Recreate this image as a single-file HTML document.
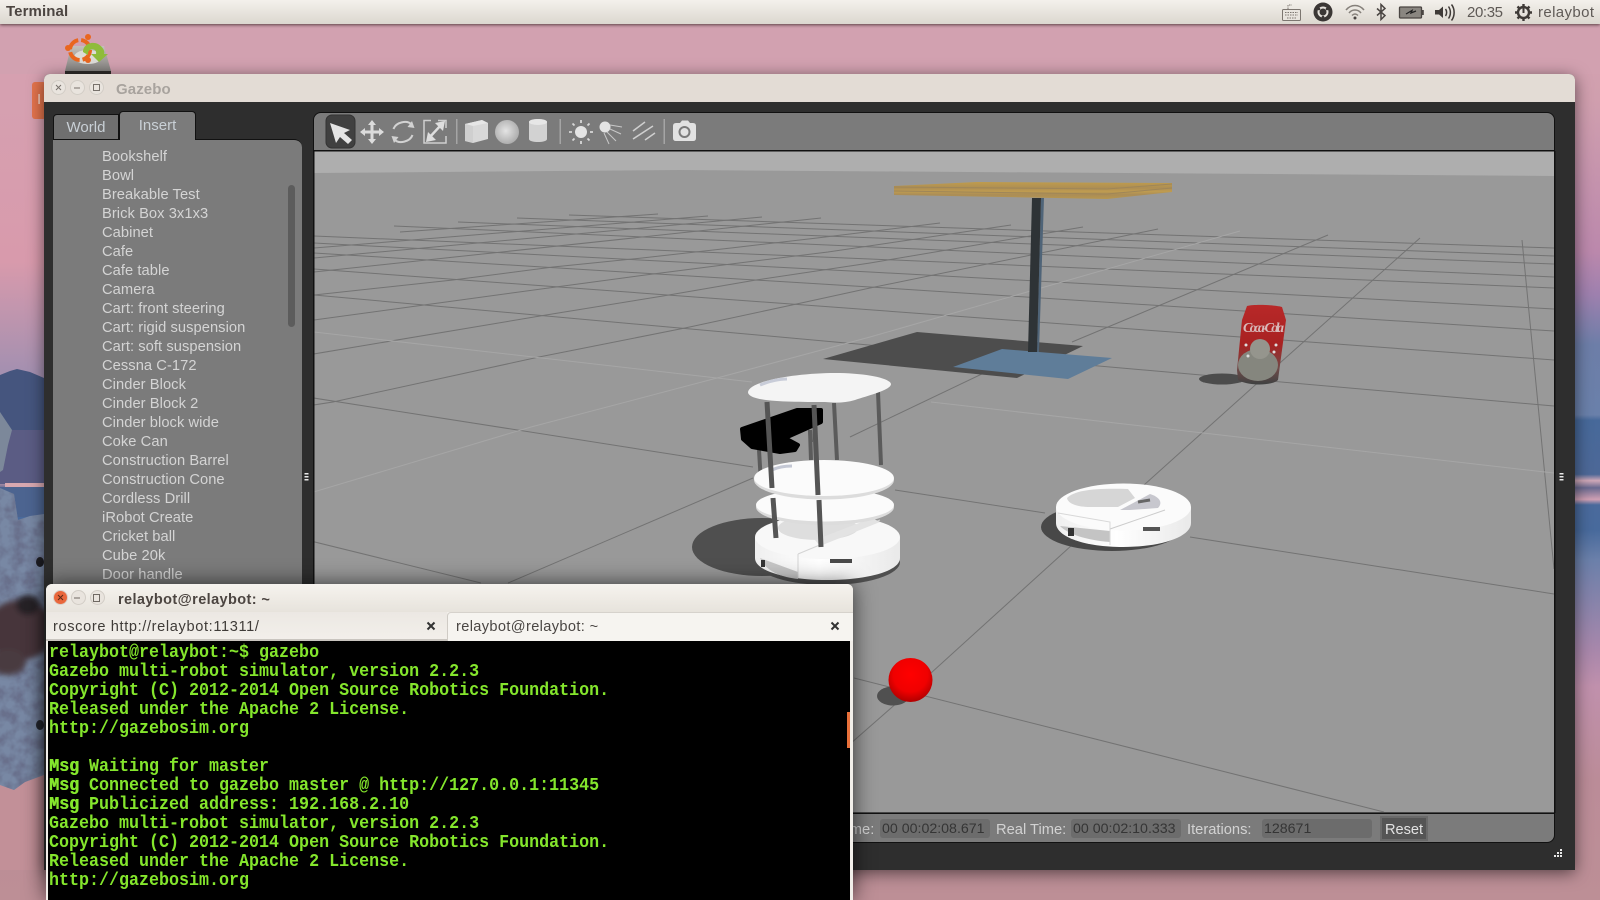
<!DOCTYPE html>
<html lang="en"><head><meta charset="utf-8"><title>Gazebo</title>
<style>
html,body{margin:0;padding:0;width:1600px;height:900px;overflow:hidden;background:#c99aa8}
body{position:relative;font-family:"Liberation Sans",sans-serif}
.a{position:absolute;white-space:nowrap}
svg.full{position:absolute;left:0;top:0}
#topbar{left:0;top:0;width:1600px;height:24px;background:linear-gradient(#f4f1ec,#dcd7cf);box-shadow:0 1px 3px rgba(50,30,30,.75)}
#gz{left:44px;top:74px;width:1531px;height:796px;background:#2e2e2e;border-radius:6px 6px 0 0;box-shadow:0 3px 16px rgba(0,0,0,.55)}
#gztitle{left:0;top:0;width:1531px;height:28px;background:#e3dcd5;border-radius:6px 6px 0 0}
.wb{position:absolute;width:15px;height:15px;border-radius:50%;background:#e9e4de;border:1px solid #d2cdc6;box-sizing:border-box}
.tabw{background:#6f6f6f;border:1px solid #111;box-sizing:border-box;border-radius:4px 0 0 0;color:#c9d0d6;font-size:15px;text-align:center}
.tabi{background:#7b7b7b;border:1px solid #111;border-bottom:0;box-sizing:border-box;border-radius:4px 4px 0 0;color:#c9d0d6;font-size:15px;text-align:center}
#side{left:53px;top:139px;width:249px;height:470px;background:#7b7b7b;border-top:1px solid #111;border-radius:0 8px 0 0;box-sizing:border-box}
.it{position:absolute;left:49px;font-size:14.7px;line-height:19px;color:#d4d4d4;white-space:nowrap;letter-spacing:.06px;margin-top:2px}
#scroll{left:288px;top:185px;width:7px;height:142px;background:#5c5c5c;border-radius:4px}
#vp{left:313px;top:112px;width:1242px;height:731px;background:#7b7b7b;border:1px solid #111;border-radius:8px;box-sizing:border-box}
.st{position:absolute;top:821px;font-size:14.7px;line-height:18px;color:#d2d2d2;white-space:nowrap}
.fld{position:absolute;top:819px;height:19px;background:#6c6c6c;border-radius:3px;color:#353535;font-size:14.2px;line-height:21px;padding-left:2px;box-sizing:border-box;white-space:nowrap}
#term{left:46px;top:584px;width:807px;height:316px;background:#f2efea;border-radius:6px 6px 0 0;box-shadow:0 0 22px rgba(0,0,0,.65)}
#ttl{left:0;top:0;width:807px;height:28px;background:linear-gradient(#f6f3ee,#e7e3dc);border-radius:6px 6px 0 0}
#tab1{left:0;top:28px;width:401px;height:29px;background:linear-gradient(#ece8e3,#f2efea);border-bottom:2px solid #c9c5bf;box-sizing:border-box}
#tab2{left:401px;top:28px;width:406px;height:29px;background:#f6f4f0;border-left:1px solid #cfcbc5;border-top:1px solid #d6d2cc;box-sizing:border-box;border-radius:4px 0 0 0}
#blk{left:2px;top:57px;width:802px;height:259px;background:#000}
#txt{left:3px;top:60px;margin:0;white-space:pre;font-family:"Liberation Mono",monospace;font-size:18px;font-weight:bold;line-height:19.03px;color:#84e62c;transform:scaleX(.926);transform-origin:0 0}
#txt b{text-shadow:.6px 0 0 #84e62c}
#sb{left:801px;top:128px;width:3px;height:36px;background:#e8703a}
</style></head><body>

<svg class="full" width="1600" height="900" viewBox="0 0 1600 900">
<defs>
<linearGradient id="wp" x1="0" y1="0" x2="0" y2="900" gradientUnits="userSpaceOnUse">
<stop offset="0" stop-color="#d6a4b2"/><stop offset=".11" stop-color="#d09fae"/><stop offset=".28" stop-color="#bb88ac"/><stop offset=".327" stop-color="#9e80ae"/><stop offset=".383" stop-color="#6d7ea8"/><stop offset=".461" stop-color="#6a80aa"/><stop offset=".467" stop-color="#47699a"/><stop offset=".527" stop-color="#4d6897"/><stop offset=".534" stop-color="#d0a8b8"/><stop offset=".542" stop-color="#6a6a90"/><stop offset=".555" stop-color="#d0a0b4"/><stop offset=".561" stop-color="#4a6a9c"/><stop offset=".589" stop-color="#486a9c"/><stop offset=".622" stop-color="#6b80aa"/><stop offset=".722" stop-color="#a887ab"/><stop offset=".763" stop-color="#c090ac"/><stop offset=".867" stop-color="#bb8c98"/><stop offset="1" stop-color="#bd8f96"/>
</linearGradient>
<linearGradient id="lf" x1="0" y1="100" x2="0" y2="370" gradientUnits="userSpaceOnUse"><stop offset="0" stop-color="#d6a0b0"/><stop offset=".6" stop-color="#d89aac"/><stop offset="1" stop-color="#a590b0"/></linearGradient>
<linearGradient id="hd" x1="0" x2="0" y1="0" y2="1"><stop offset="0" stop-color="#c4c0bb"/><stop offset="1" stop-color="#858280"/></linearGradient>
<filter id="mot" x="0" y="0" width="100%" height="100%"><feTurbulence type="fractalNoise" baseFrequency=".08" numOctaves="3" seed="4"/><feColorMatrix values="0 0 0 0 .14  0 0 0 0 .16  0 0 0 0 .26  2.6 0 0 0 -.9"/><feComposite in2="SourceAlpha" operator="in"/><feMerge><feMergeNode in="SourceGraphic"/><feMergeNode/></feMerge></filter>
<filter id="bl"><feGaussianBlur stdDeviation="3"/></filter>
</defs>
<rect width="1600" height="900" fill="url(#wp)"/>
<rect x="0" y="24" width="44" height="420" fill="url(#lf)"/>
<rect x="0" y="24" width="1600" height="50" fill="#d2a1b0"/>
<path d="M0,375 L10,371 L17,369 L30,372 L44,378 L44,484 L0,484Z" fill="#45557e"/>
<path d="M0,430 H44 V484 H0Z" fill="#6a6088" opacity=".6"/>
<path d="M0,412 L12,430 L8,445 L3,470 L0,472Z" fill="#7c889a"/>
<rect x="5" y="483" width="39" height="4" fill="#d8a8b0"/>
<rect x="0" y="487" width="44" height="30" fill="#4c6490"/>
<rect x="0" y="530" width="44" height="340" fill="#c29098"/>
<path d="M0,488 L14,494 L18,520 L30,516 L44,514 L44,775 L25,782 L14,790 L0,785Z" fill="#7888a4" filter="url(#mot)"/>
<g filter="url(#bl)"><ellipse cx="20" cy="630" rx="34" ry="30" fill="#46363a"/><ellipse cx="8" cy="662" rx="18" ry="13" fill="#4a3a40"/><ellipse cx="28" cy="605" rx="12" ry="10" fill="#262226"/></g>
<ellipse cx="40" cy="562" rx="4" ry="5" fill="#1e1e24"/><ellipse cx="40" cy="725" rx="4" ry="5" fill="#262830"/>
<!-- desktop icon -->
<g>
<polygon points="65,71 71,46 104,46 111,71" fill="url(#hd)"/>
<rect x="65" y="71" width="46" height="4" fill="#2f2c2a"/>
<ellipse cx="88" cy="57" rx="14" ry="7" fill="#dddbd7"/>
<circle cx="80" cy="50" r="10" fill="none" stroke="#e9661f" stroke-width="4" stroke-dasharray="13 3"/>
<circle cx="88" cy="37" r="3" fill="#e9661f"/><circle cx="68" cy="48" r="3" fill="#e9661f"/><circle cx="88" cy="60" r="3" fill="#e9661f"/>
<path d="M83,52 C83,44 92,41 98,44 C103,47 105,51 104,54 H108 L99,62 L91,54 H96 C97,50 93,48 90,50 C88,51 88,53 88,55Z" fill="#8fbc3a"/>
</g>
<rect x="32" y="82" width="14" height="37" rx="3" fill="#e4744d"/>
<text x="37" y="104" font-size="15" font-family="Liberation Sans" fill="#f6d9cc">I</text>
</svg>

<div class="a" id="topbar"></div>
<div class="a" style="left:6px;top:3px;font-size:15px;line-height:18px;font-weight:bold;color:#4c4541;letter-spacing:.1px">Terminal</div>

<svg class="full" width="1600" height="24" viewBox="0 0 1600 24" style="z-index:3">
<g fill="none" stroke="#7c7670">
<rect x="1282.5" y="9.5" width="18" height="11" rx="1" fill="#e8e4de"/><path d="M1288,9 V5 H1292 M1285,12.5 H1298 M1285,15 H1298 M1287,18 H1296" stroke-dasharray="1.5 1" />
</g>
<circle cx="1323" cy="12" r="9.5" fill="#3b3735"/><circle cx="1323" cy="12" r="4.5" fill="none" stroke="#e6e2dc" stroke-width="2"/><circle cx="1319" cy="9" r="1.3" fill="#3b3735"/><circle cx="1327" cy="9" r="1.3" fill="#3b3735"/><circle cx="1323" cy="17" r="1.3" fill="#3b3735"/>
<g fill="none" stroke="#85807a" stroke-width="1.5"><path d="M1346,10 C1351,4 1359,4 1364,10"/><path d="M1349,13 C1352,9 1358,9 1361,13"/><path d="M1352,15.5 C1354,13.5 1356,13.5 1358,15.5"/></g><circle cx="1355" cy="18" r="1.5" fill="#4a4542"/>
<path d="M1377,8.5 L1385,15.5 L1381,19.5 V4.5 L1385,8.5 L1377,15.5" fill="none" stroke="#4a4542" stroke-width="1.5"/>
<rect x="1399.5" y="7" width="22" height="11" rx="1" fill="#8a8680" stroke="#4a4542" stroke-width="1.3"/><rect x="1422" y="10" width="1.8" height="5" fill="#4a4542"/><path d="M1406,14 L1412,10.5 L1411,13 L1416,11" fill="none" stroke="#222" stroke-width="1.3"/>
<path d="M1435,10 H1439 L1443,6.5 V18 L1439,14.5 H1435Z" fill="#3f3a37"/><g fill="none" stroke="#3f3a37" stroke-width="1.5"><path d="M1445.5,9 C1447,11 1447,14 1445.5,16"/><path d="M1448.5,6.5 C1451,10 1451,15 1448.5,18.5"/><path d="M1451.5,4.5 C1455,9 1455,16 1451.5,20.5"/></g>
<g stroke="#3f3a37" fill="none"><circle cx="1523.5" cy="12.5" r="5.5" stroke-width="2.4"/><path d="M1523.5,4 V8 M1523.5,17 V21 M1515,12.5 H1518 M1529,12.5 H1532 M1517.5,6.5 L1519.5,8.5 M1529.5,6.5 L1527.5,8.5 M1517.5,18.5 L1519.5,16.5 M1529.5,18.5 L1527.5,16.5" stroke-width="2.4"/><path d="M1523.5,7 V13" stroke-width="2"/></g>
<text x="1467" y="17" font-size="15" fill="#5f5a56" font-family="Liberation Sans" textLength="36">20:35</text>
<text x="1538" y="17" font-size="15" fill="#5f5a56" font-family="Liberation Sans" textLength="56">relaybot</text>
</svg>

<div class="a" id="gz">
 <div class="a" id="gztitle"></div>
 <div class="wb" style="left:7px;top:6px"></div><div class="wb" style="left:26px;top:6px"></div><div class="wb" style="left:45px;top:6px"></div>
 <svg class="a" style="left:7px;top:6px" width="56" height="16" fill="none" stroke="#77716b"><path d="M5,5 L10,10 M10,5 L5,10"/><path d="M23,8 H29"/><rect x="42.500" y="4.500" width="6" height="6"/></svg>
 <div class="a" style="left:72px;top:7px;font-size:15px;line-height:18px;font-weight:bold;color:#a8a39e;letter-spacing:.1px">Gazebo</div>
</div>

<div class="a tabw" style="left:53px;top:114px;width:66px;height:26px;line-height:25px">World</div>
<div class="a tabi" style="left:119px;top:111px;width:77px;height:29px;line-height:28px;z-index:2">Insert</div>
<div class="a" id="side">
<div class="it" style="top:6px">Bookshelf</div><div class="it" style="top:25px">Bowl</div><div class="it" style="top:44px">Breakable Test</div><div class="it" style="top:63px">Brick Box 3x1x3</div><div class="it" style="top:82px">Cabinet</div><div class="it" style="top:101px">Cafe</div><div class="it" style="top:120px">Cafe table</div><div class="it" style="top:139px">Camera</div><div class="it" style="top:158px">Cart: front steering</div><div class="it" style="top:177px">Cart: rigid suspension</div><div class="it" style="top:196px">Cart: soft suspension</div><div class="it" style="top:215px">Cessna C-172</div><div class="it" style="top:234px">Cinder Block</div><div class="it" style="top:253px">Cinder Block 2</div><div class="it" style="top:272px">Cinder block wide</div><div class="it" style="top:291px">Coke Can</div><div class="it" style="top:310px">Construction Barrel</div><div class="it" style="top:329px">Construction Cone</div><div class="it" style="top:348px">Cordless Drill</div><div class="it" style="top:367px">iRobot Create</div><div class="it" style="top:386px">Cricket ball</div><div class="it" style="top:405px">Cube 20k</div><div class="it" style="top:424px">Door handle</div>
</div>
<div class="a" id="scroll"></div>
<div class="a" id="vp"></div>

<svg class="full" width="1600" height="900" viewBox="0 0 1600 900">
<defs>
<clipPath id="sc"><rect x="314" y="151" width="1240" height="661"/></clipPath>
<radialGradient id="ball" cx=".5" cy=".38" r=".65"><stop offset="0" stop-color="#ff0000"/><stop offset=".6" stop-color="#f00000"/><stop offset="1" stop-color="#a80000"/></radialGradient>
<linearGradient id="wh" x1="0" x2="1" y1="0" y2="0"><stop offset="0" stop-color="#efefef"/><stop offset=".45" stop-color="#ffffff"/><stop offset="1" stop-color="#e9e9e9"/></linearGradient>
<linearGradient id="can" x1="0" x2="0" y1="0" y2="1"><stop offset="0" stop-color="#b82828"/><stop offset=".5" stop-color="#a82222"/><stop offset=".8" stop-color="#6f4a48"/><stop offset="1" stop-color="#3f4242"/></linearGradient>
<linearGradient id="tbl" x1="0" x2="0" y1="0" y2="1"><stop offset="0" stop-color="#bf9c4c"/><stop offset=".35" stop-color="#ad8e54"/><stop offset=".55" stop-color="#bf9c50"/><stop offset=".75" stop-color="#ab8d56"/><stop offset="1" stop-color="#b8974e"/></linearGradient>
<radialGradient id="sph" cx=".45" cy=".45" r=".6"><stop offset="0" stop-color="#e4e4e4"/><stop offset="1" stop-color="#a9a9a9"/></radialGradient>
</defs>
<g clip-path="url(#sc)">
<rect x="314" y="151" width="1240" height="30" fill="#aeaeae"/>
<path d="M314,173 L680,170 L1554,176 V812 H314Z" fill="#999"/>
<g fill="none" stroke="#737373" stroke-width="1">
<path d="M313.600,541.700 L481,583 M854,678 L1384,812"/>
<path d="M313.600,398 L753,467 M895,490 L1045,513 M1190,537 L1554,594"/>
<path d="M313.600,295 L846,343 L1040,360 M1076,364 L1554,406"/>
<path d="M313.600,269 L1554,360"/>
<path d="M313.600,253 L870,287 L1554,331"/>
<path d="M313.600,243 L870,272 L1554,309"/>
<path d="M313.600,236 L870,259 L1554,288"/>
<path d="M394,226 L1554,277"/>
<path d="M458,222 L1554,264"/>
<path d="M517,218 L1554,256"/>
<path d="M569,215 L1554,248"/>
<path d="M508,583 L753,478 M850,437 L986,372 M1072,342 L1328,235"/>
<path d="M850,744 L931,673 L1072,545 L1144,485 L1253,387 L1420,238"/>
<path d="M1522,240 L1554,569"/>
<path d="M313.600,405 L333,402 L539,357 L685,328 L792,305 L870,288 L1158,229"/>
<path d="M313.600,354 L546,315 L663,296 L756,280 L870,263 L1083,227"/>
<path d="M313.600,320 L424,305 L556,287 L653,274 L739,263 L828,252 L1011,225"/>
<path d="M313.600,295 L453,280 L553,267 L642,258 L731,248 L817,238 L940,223"/>
<path d="M313.600,272 L821,218"/><path d="M313.600,258 L762,217"/><path d="M313.600,248 L708,216"/><path d="M400,232 L658,214"/>
</g>
<g fill="none" stroke="#a6a6a6" stroke-width="1">
<path d="M313.600,332 L752,382 M931,402 L1554,473"/>
<path d="M313.600,492 L531,427 L717,378 L870,337 L1240,231"/>
</g>
<!-- table -->
<path d="M917,332 L1083,346 L1017,378 L823,359Z" fill="#4d4d4d"/>
<path d="M1002,349 L1112,358 L1068,379 L953,367Z" fill="#5f7d99"/>
<path d="M1041,198 L1044,198 L1039,352 L1037,352Z" fill="#4f6478"/>
<path d="M1032,198 L1041,198 L1037,352 L1028,352Z" fill="#2e3336"/>
<path d="M894,186 L977,182 L1172,183 L1172,192 L1107,199 L894,195Z" fill="url(#tbl)"/>
<path d="M894,187 L1107,189 L1172,184 M894,191 L1107,194 L1172,188" stroke="#9f8658" fill="none"/>
<!-- can -->
<ellipse cx="1222" cy="379" rx="23" ry="5.500" fill="#4c4c4c"/>
<path d="M1247,306 C1255,304 1275,305 1282,307 L1286,320 L1278,380 C1272,386 1248,386 1238,380 L1237,370 L1242,320Z" fill="url(#can)"/>
<ellipse cx="1258" cy="365" rx="20" ry="16" fill="#85867e"/><circle cx="1260" cy="349" r="10" fill="#95958d"/>
<g fill="#ddd"><circle cx="1246" cy="345" r="1.500"/><circle cx="1276" cy="345" r="1.500"/><circle cx="1248" cy="356" r="1.500"/><circle cx="1274" cy="352" r="1.500"/></g>
<text x="1243" y="332" font-size="14" font-style="italic" font-weight="bold" font-family="Liberation Serif" fill="#d8b8b8" textLength="41">Coca-Cola</text>
<!-- irobot -->
<ellipse cx="1112" cy="527" rx="71" ry="24" fill="#484848"/>
<path d="M1056,507 V523 C1056,537 1085,547 1123,547 C1161,547 1191,537 1191,523 V507Z" fill="url(#wh)"/>
<ellipse cx="1123.500" cy="507" rx="67.500" ry="23.500" fill="#fbfbfb"/>
<path d="M1067,498 C1075,490 1095,488 1128,489 L1135,498 L1118,507 L1090,507 C1078,507 1068,504 1067,498Z" fill="#d6d6d6"/>
<path d="M1120,510 L1150,494 C1160,497 1163,503 1158,508 L1130,510Z" fill="#c7c7ce"/>
<path d="M1138,502 L1150,500" stroke="#666" stroke-width="3"/>
<path d="M1060,526 L1110,531 L1110,542 C1085,540 1068,534 1060,526Z" fill="#c4c4c4"/>
<rect x="1068" y="528" width="6" height="8" fill="#333"/><rect x="1143" y="527" width="17" height="4" fill="#555"/>
<path d="M1110,529 L1165,510" stroke="#ccc" fill="none"/><path d="M1058,513 L1110,522 V545" stroke="#d8d8d8" fill="none"/>
<!-- turtlebot -->
<ellipse cx="762" cy="547" rx="70" ry="29" fill="#4f4f4f"/>
<ellipse cx="828" cy="562" rx="72" ry="23" fill="#4f4f4f"/>
<path d="M755,537 V558 C755,572 790,580 827,580 C864,580 900,572 900,558 V537Z" fill="url(#wh)"/>
<ellipse cx="827.500" cy="537" rx="72.500" ry="22" fill="#f8f8f8"/>
<ellipse cx="818" cy="528" rx="40" ry="12" fill="#dedede"/>
<path d="M760,558 L798,572 V579 C780,577 766,571 760,558Z" fill="#c6c6c6"/>
<rect x="761" y="560" width="4" height="7" fill="#333"/><rect x="830" y="559" width="22" height="4" fill="#4a4a4a"/>
<path d="M798,554 V578 M798,554 L880,520" stroke="#d4d4d4" fill="none"/>
<path d="M820,546 L880,522 L872,518 L815,540Z" fill="#e3e3e3"/>
<ellipse cx="825" cy="507" rx="69" ry="18" fill="#dcdcdc"/><ellipse cx="825" cy="505" rx="69" ry="16.500" fill="#fbfbfb"/>
<path d="M759,450 L761,483 M810,430 L811,460 M834,403 L837,460 M878,392 L881,465" stroke="#5b5b5b" stroke-width="4" fill="none"/>
<ellipse cx="824" cy="480" rx="70" ry="19.500" fill="#dcdcdc"/><ellipse cx="824" cy="478" rx="70" ry="18" fill="#fbfbfb"/>
<path d="M772,470 C778,467 785,466 792,466" stroke="#c4c8d4" stroke-width="3" fill="none"/>
<path d="M742,429 L797,410 L821,410 L821,422 L785,438 L798,445 L795,450 L780,452 L752,447 L743,439Z" fill="#000" stroke="#000" stroke-width="4" stroke-linejoin="round"/>
<path d="M810,430 L811,442" stroke="#5b5b5b" stroke-width="4"/>
<path d="M748,392 C750,380 800,373 835,373 C865,373 890,378 891,384 C891,390 870,395 855,400 C845,403 835,403 825,402 C790,402 748,402 748,392Z" fill="#f4f4f4"/>
<path d="M760,385 C770,381 780,379 787,379" stroke="#c8ccd8" stroke-width="3" fill="none"/>
<path d="M767,402 L772,488 M773,498 L776,538 M814,405 L818,495 M819,500 L821,547" stroke="#555" stroke-width="5" fill="none"/>
<!-- ball -->
<ellipse cx="893" cy="696" rx="16" ry="9.500" fill="#505050"/>
<circle cx="910.500" cy="680" r="22" fill="url(#ball)"/>
</g>
<rect x="314" y="150" width="1240" height="1.500" fill="#111"/><rect x="314" y="812.500" width="1240" height="1.500" fill="#111"/>
<rect x="313.500" y="151" width="1" height="662" fill="#111"/><rect x="1554" y="151" width="1.500" height="662" fill="#111"/>

<!-- toolbar -->
<rect x="326" y="115" width="29" height="33" rx="6" fill="#404040" stroke="#333"/>
<path d="M330,123 L350,130 L344,133 L352,140 L348,144 L340,137 L336,143Z" fill="#e4e4e4"/>
<g fill="#dcdcdc">
<path d="M372,120 L376,125 H373.500 V130.500 H379 V128 L384,132 L379,136 V133.500 H373.500 V139 H376 L372,144 L368,139 H370.500 V133.500 H365 V136 L360,132 L365,128 V130.500 H370.500 V125 H368Z"/>
</g>
<g fill="none" stroke="#d2d2d2" stroke-width="2">
<path d="M393.500,129 C396,122 407,120 411,124 L412.500,126"/><path d="M412.500,135 C410,142 399,144 395,140 L393.500,138"/>
</g>
<path d="M412,121 L414.500,128 L407.500,127Z M394,143 L391.500,136 L398.500,137Z" fill="#d2d2d2"/>
<path d="M431,120.500 H424 V143 H446 V136" fill="none" stroke="#cfcfcf" stroke-width="1.500"/><path d="M438,120.500 H446 V128" fill="none" stroke="#cfcfcf" stroke-width="1.500"/>
<path d="M429,138 L441,125" stroke="#dedede" stroke-width="2.500"/><path d="M445,121 L435,123 L443,131Z M426,142 L436,140 L428,132Z" fill="#dedede"/>
<g fill="#a5a5a5"><rect x="456" y="119" width="1.500" height="25"/><rect x="559.500" y="119" width="1.500" height="25"/><rect x="663.500" y="119" width="1.500" height="25"/></g>
<path d="M465,124 L482,120 L488,123 V139 L473,143 L465,141Z" fill="#d8d8d8"/><path d="M465,124 L473,126 L488,123 L482,120Z" fill="#e6e6e6"/><path d="M465,124 L473,126 V143 L465,141Z" fill="#cfcfcf"/>
<circle cx="507" cy="132" r="12" fill="url(#sph)"/>
<path d="M529,122 C529,118 547,118 547,122 V139 C547,143 529,143 529,139Z" fill="#d2d2d2"/><ellipse cx="538" cy="122" rx="9" ry="3" fill="#e6e6e6"/>
<circle cx="581" cy="132" r="6" fill="#e4e4e4"/>
<g stroke="#d8d8d8" stroke-width="1.800"><path d="M581,120 V123 M581,141 V144 M569,132 H572 M590,132 H593 M572.500,123.500 L574.500,125.500 M589.500,123.500 L587.500,125.500 M572.500,140.500 L574.500,138.500 M589.500,140.500 L587.500,138.500"/></g>
<circle cx="605" cy="127" r="5.500" fill="#e4e4e4"/>
<g stroke="#c8c8c8" stroke-width="1" fill="#c8c8c8"><path d="M610,125 L622,127 M610,129 L621,134 M607,132 L616,141 M604,133 L609,144"/></g>
<g stroke="#cfcfcf" stroke-width="1.500"><path d="M633,131 L645,122 M633,139 L653,126 M645,140 L655,133"/></g>
<path d="M673,126 Q673,123 676,123 H680 L682,120.500 H688 L690,123 H693 Q696,123 696,126 V138 Q696,141 693,141 H676 Q673,141 673,138Z" fill="#e2e2e2"/><circle cx="684.500" cy="132" r="5" fill="none" stroke="#7b7b7b" stroke-width="2"/>
<g fill="#e8e8e8"><rect x="304.500" y="473" width="4" height="1.500"/><rect x="304.500" y="476" width="4" height="1.500"/><rect x="304.500" y="479" width="4" height="1.500"/><rect x="1559.500" y="473" width="4" height="1.500"/><rect x="1559.500" y="476" width="4" height="1.500"/><rect x="1559.500" y="479" width="4" height="1.500"/>
<rect x="1554" y="855" width="2" height="2"/><rect x="1557" y="855" width="2" height="2"/><rect x="1560" y="855" width="2" height="2"/><rect x="1557" y="852" width="2" height="2"/><rect x="1560" y="852" width="2" height="2"/><rect x="1560" y="849" width="2" height="2"/></g>
</svg>

<div class="st" style="left:809px">Sim Time:</div>
<div class="fld" style="left:880px;width:110px">00 00:02:08.671</div>
<div class="st" style="left:996px">Real Time:</div>
<div class="fld" style="left:1071px;width:110px">00 00:02:10.333</div>
<div class="st" style="left:1187px">Iterations:</div>
<div class="fld" style="left:1262px;width:110px">128671</div>
<div class="a" style="left:1380px;top:816px;width:48px;height:25px;background:#555;border:2px solid #6a6a6a;box-sizing:border-box;color:#e2e2e2;font-size:14.6px;line-height:24px;text-align:center">Reset</div>

<div class="a" id="term">
 <div class="a" id="ttl"></div>
 <div class="wb" style="left:7px;top:6px;background:#e9673c;border-color:#d9d0c8"></div><div class="wb" style="left:25px;top:6px"></div><div class="wb" style="left:44px;top:6px"></div>
 <svg class="a" style="left:7px;top:6px" width="56" height="16" fill="none" stroke="#6f6963"><path d="M5,5 L10,10 M10,5 L5,10" stroke="#5a2a18"/><path d="M21,8 H27"/><rect x="40.500" y="4.500" width="6" height="7"/></svg>
 <div class="a" style="left:72px;top:7px;font-size:14.5px;line-height:18px;font-weight:bold;color:#4c4541;letter-spacing:.4px">relaybot@relaybot: ~</div>
 <div class="a" id="tab1"><span class="a" style="left:7px;top:6px;font-size:14.6px;line-height:18px;color:#3f3b38;letter-spacing:.63px">roscore http://relaybot:11311/</span><svg class="a" style="left:380px;top:9px" width="11" height="11"><path d="M1.500,1.500 L8.500,8.500 M8.500,1.500 L1.500,8.500" stroke="#333" stroke-width="2"/></svg></div>
 <div class="a" id="tab2"><span class="a" style="left:8px;top:5px;font-size:14.6px;line-height:18px;color:#4a4643;letter-spacing:.36px">relaybot@relaybot: ~</span><svg class="a" style="left:382px;top:8px" width="11" height="11"><path d="M1.500,1.500 L8.500,8.500 M8.500,1.500 L1.500,8.500" stroke="#333" stroke-width="2"/></svg></div>
 <div class="a" id="blk"></div>
<pre class="a" id="txt">relaybot@relaybot:~$ gazebo
Gazebo multi-robot simulator, version 2.2.3
Copyright (C) 2012-2014 Open Source Robotics Foundation.
Released under the Apache 2 License.
http://gazebosim.org

<b>Msg</b> Waiting for master
<b>Msg</b> Connected to gazebo master @ http://127.0.0.1:11345
<b>Msg</b> Publicized address: 192.168.2.10
Gazebo multi-robot simulator, version 2.2.3
Copyright (C) 2012-2014 Open Source Robotics Foundation.
Released under the Apache 2 License.
http://gazebosim.org</pre>
 <div class="a" id="sb"></div>
</div>
</body></html>
